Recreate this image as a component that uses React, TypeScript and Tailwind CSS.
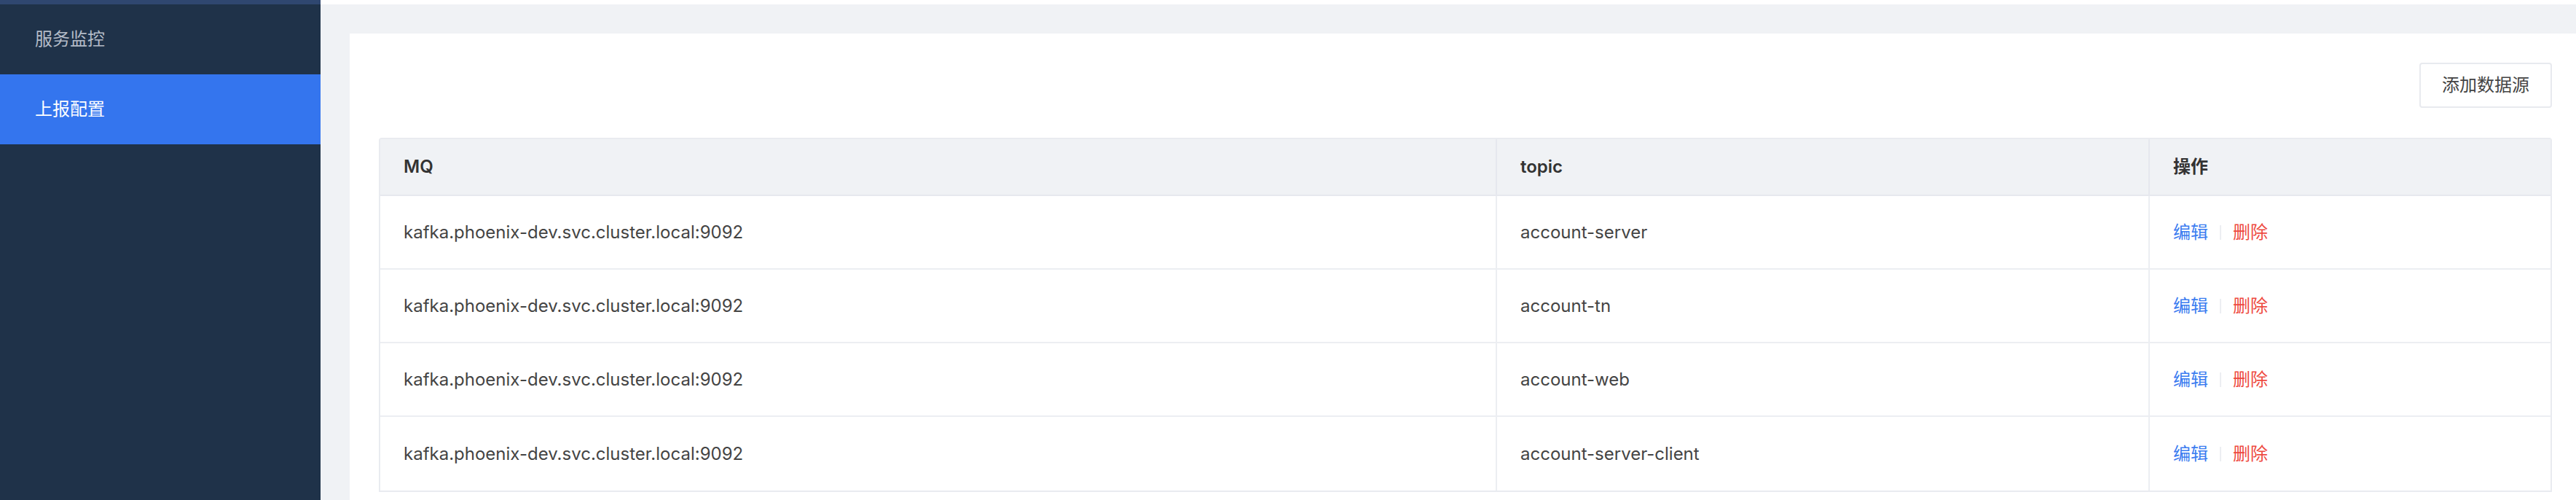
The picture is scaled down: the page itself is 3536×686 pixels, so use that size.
import React from 'react';

const rows = [
  { mq: 'kafka.phoenix-dev.svc.cluster.local:9092', topic: 'account-server' },
  { mq: 'kafka.phoenix-dev.svc.cluster.local:9092', topic: 'account-tn' },
  { mq: 'kafka.phoenix-dev.svc.cluster.local:9092', topic: 'account-web' },
  { mq: 'kafka.phoenix-dev.svc.cluster.local:9092', topic: 'account-server-client' },
];

const font = { fontFamily: 'Inter, "Noto Sans CJK SC", sans-serif' };

function Sidebar() {
  return (
    <aside className="w-[440px] shrink-0 bg-[#1f3249] flex flex-col">
      <div className="h-[6px] bg-[#2f4770]" />
      <div className="h-[96px] flex items-center pl-[48px] text-[24px] text-[#b4bcc8]">服务监控</div>
      <div className="h-[96px] flex items-center pl-[48px] text-[24px] text-white bg-[#3475ee]">上报配置</div>
    </aside>
  );
}

export default function App() {
  return (
    <div className="flex h-[686px] w-[3536px] overflow-hidden bg-[#f0f2f5]" style={font}>
      <Sidebar />
      {/* Main */}
      <main className="flex-1 flex flex-col min-w-0">
        <div className="h-[6px] bg-white shrink-0" />
        <div className="pl-[40px] pt-[40px]">
          <div className="w-[3063px] bg-white p-[40px]">
            <div className="flex justify-end">
              <button className="h-[62px] w-[182px] rounded-[4px] border-2 border-[#e8eaef] bg-white text-[24px] text-[#444]">
                添加数据源
              </button>
            </div>
            {/* Table */}
            <div className="mt-[41px] border-2 border-[#e9ebf0] rounded-t-[4px] text-[24px]">
              <div className="grid grid-cols-[1531px_896px_1fr] h-[78px] bg-[#f0f2f5] border-b-2 border-[#e6e8ee] font-semibold text-[#333]">
                <div className="flex items-center pl-[32px]">MQ</div>
                <div className="flex items-center pl-[32px] border-l-2 border-[#e6e8ee]">topic</div>
                <div className="flex items-center pl-[32px] border-l-2 border-[#e6e8ee]">操作</div>
              </div>
              {rows.map((r, i) => (
                <div
                  key={i}
                  className={`grid grid-cols-[1531px_896px_1fr] h-[101px] text-[#444] ${i < rows.length - 1 ? 'border-b-2 border-[#eceef2]' : ''}`}
                >
                  <div className="flex items-center pl-[32px]">{r.mq}</div>
                  <div className="flex items-center pl-[32px] border-l-2 border-[#eceef2]">{r.topic}</div>
                  <div className="flex items-center pl-[32px] border-l-2 border-[#eceef2]">
                    <span className="text-[#3b7cf0]">编辑</span>
                    <span className="mx-[16px] h-[20px] w-[2px] bg-[#eceef2]" />
                    <span className="text-[#ee4a40]">删除</span>
                  </div>
                </div>
              ))}
            </div>
          </div>
        </div>
      </main>
    </div>
  );
}
